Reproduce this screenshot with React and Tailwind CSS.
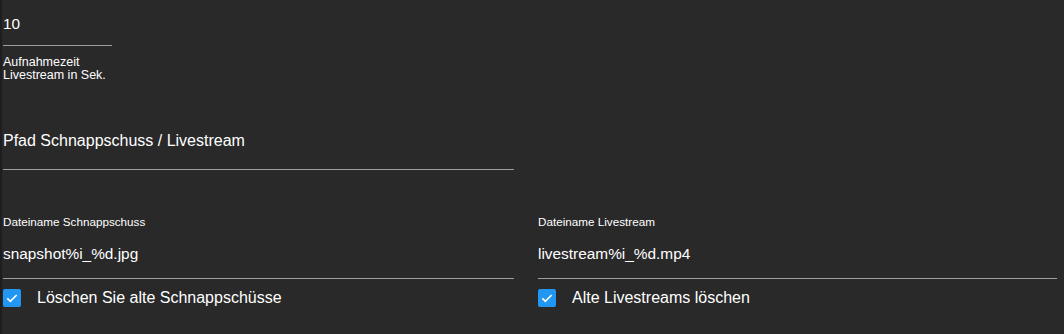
import React from "react";

const CheckRow = ({ label }) => (
  <div className="mt-[9px] flex h-[20px] items-center">
    <div className="flex h-[18px] w-[18px] items-center justify-center rounded-[2px] bg-[#2196f3]">
      <svg viewBox="0 0 24 24" className="h-[16px] w-[16px]" fill="none">
        <path d="M5 12.5l4.5 4.5L19 7.5" stroke="white" strokeWidth="2.6" />
      </svg>
    </div>
    <span className="ml-[16px] text-[16px] leading-[20px]">{label}</span>
  </div>
);

const FileField = ({ title, value, check }) => (
  <div className="flex flex-col">
    <div className="text-[11.7px] leading-[12px]">{title}</div>
    <div className="mt-[16px] border-b border-[#9e9e9e] pb-[14px] text-[15.4px] leading-[20px]">
      {value}
    </div>
    <CheckRow label={check} />
  </div>
);

const App = () => {
  return (
    <div className="h-[334px] w-[1064px] overflow-hidden border-l-2 border-[#1e1e1e] bg-[#292929] pl-px font-['Liberation_Sans',Arial,sans-serif] text-white">
      {/* Aufnahmezeit */}
      <div className="pt-[14px]">
        <div className="w-[109px] border-b border-[#9e9e9e] pb-[11px] text-[15.4px] leading-[20px]">
          10
        </div>
        <div className="mt-[10px] text-[12.5px] leading-[13px]">
          Aufnahmezeit
          <br />
          Livestream in Sek.
        </div>
      </div>

      {/* Pfad */}
      <div className="mt-[49px] w-[511px] border-b border-[#9e9e9e] pb-[18px] text-[16px] leading-[20px]">
        Pfad Schnappschuss / Livestream
      </div>

      <div className="mt-[46px] flex gap-[24px]">
        <div className="w-[511px]">
          <FileField
            title="Dateiname Schnappschuss"
            value="snapshot%i_%d.jpg"
            check="Löschen Sie alte Schnappschüsse"
          />
        </div>
        <div className="w-[519px]">
          <FileField
            title="Dateiname Livestream"
            value="livestream%i_%d.mp4"
            check="Alte Livestreams löschen"
          />
        </div>
      </div>
    </div>
  );
};

export default App;
